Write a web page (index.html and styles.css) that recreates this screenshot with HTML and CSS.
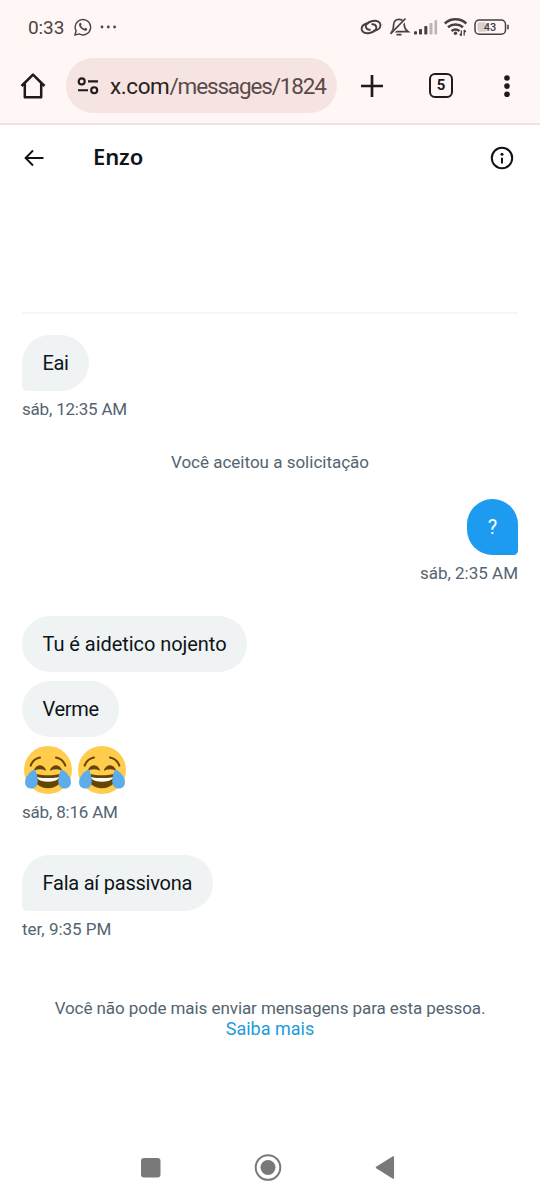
FILE: index.html
```html
<!DOCTYPE html>
<html lang="pt-BR">
<head>
<meta charset="utf-8">
<title>Enzo</title>
<link rel="stylesheet" href="styles.css">
</head>
<body>
<svg class="defs" width="0" height="0" aria-hidden="true">
  <symbol id="joy" viewBox="0 0 36 36">
    <circle cx="18" cy="18" r="18" fill="#ffcc4d"/>
    <g fill="#664500">
      <path d="M28.457 17.797c-.06-.135-1.499-3.297-4.457-3.297-2.957 0-4.397 3.162-4.457 3.297-.092.207-.032.449.145.591.175.142.426.147.61.014.012-.009 1.262-.902 3.702-.902 2.426 0 3.674.881 3.702.901.088.066.194.099.298.099.11 0 .221-.037.312-.109.177-.142.238-.386.145-.594zm-12 0c-.06-.135-1.499-3.297-4.457-3.297-2.957 0-4.397 3.162-4.457 3.297-.092.207-.032.449.144.591.176.142.427.147.61.014.013-.009 1.262-.902 3.703-.902 2.426 0 3.674.881 3.702.901.088.066.194.099.298.099.11 0 .221-.037.312-.109.178-.142.237-.386.145-.594z"/>
      <path d="M18 22c-3.623 0-6.027-.422-9-1-.679-.131-2 0-2 2 0 4 4.595 8.700 11 8.700 6.404 0 11-4.700 11-8.700 0-2-1.321-2.132-2-2-2.973.578-5.377 1-9 1z"/>
    </g>
    <path d="M9 23s3 1 9 1 9-1 9-1-1.500 3.800-9 3.800S9 23 9 23z" fill="#fff"/>
    <path d="M5 14.700C6 12 8.500 9.300 12 8.700M31 14.700C30 12 27.500 9.300 24 8.700" fill="none" stroke="#664500" stroke-width="1.500" stroke-linecap="round"/>
    <path d="M8 17.700C4.500 19 .8 23 .8 27.200c0 3 2 4.700 4.500 4.700 3.200 0 5-2.300 5-5.700 0-3-1-6.500-2.300-8.500z" fill="#5dadec"/>
    <path d="M28 17.700c3.500 1.300 7.200 5.300 7.200 9.500 0 3-2 4.700-4.500 4.700-3.200 0-5-2.300-5-5.700 0-3 1-6.500 2.300-8.500z" fill="#5dadec"/>
  </symbol>
</svg>

<div class="chrome">
  <div class="status">
    <span class="clock">0:33</span>
    <svg class="whatsapp" width="18" height="18" viewBox="0 0 18 18" fill="none" stroke="#4b4444" stroke-width="1.400">
      <path d="M1 17l1.100-4.200A7.700 7.700 0 1 1 5.100 15.900z"/>
      <path d="M5.600 5.200c.5-.7 1.200-.6 1.500.1l.5 1.300-.7 1c.8 1.500 1.800 2.500 3.500 3.200l.9-1 1.500.7c.6.3.5 1.100-.1 1.700-1 .9-2.600.5-4.300-.6-2-1.300-4.400-4.600-2.800-6.400z" fill="#4b4444" stroke="none"/>
    </svg>
    <svg width="18" height="18" viewBox="0 0 18 18" fill="#4b4444"><circle cx="2" cy="9" r="1.400"/><circle cx="8.300" cy="9" r="1.400"/><circle cx="14.600" cy="9" r="1.400"/></svg>
    <svg class="indicators" width="150" height="20" viewBox="360 17 150 20" fill="none" stroke="#484040" stroke-width="1.700">
      <g stroke-linecap="round" stroke-width="1.900">
        <path d="M368.200 23.200C363.500 24 361.300 26.500 361.700 29.500C362.200 32.500 365.500 33.800 369.500 33C374.500 32 377 29.500 376.200 26.700C375.700 25 374.200 24.200 372.300 24.300"/>
        <path d="M373.900 30.800C378.600 30 380.800 27.500 380.400 24.500C379.900 21.500 376.600 20.200 372.600 21C367.600 22 365.100 24.500 365.900 27.300C366.400 29 367.900 29.800 369.800 29.700"/>
      </g>
      <path d="M391.700 31.700h16.500c-2.600-2-3.900-3.200-3.900-6.700 0-3.500-2-5.700-5.300-5.700s-5.400 2.400-5.400 5.700c0 3.500-.4 5-1.900 6.700zM396.500 34.700h5"/>
      <path d="M406.500 18.800L391 34.300" stroke="#fff7f5" stroke-width="3"/>
      <path d="M405.500 18.500L390.500 33.800"/>
      <g stroke="none" fill="#484040">
        <rect x="414" y="31.300" width="3" height="3.200" rx=".7"/><rect x="419" y="29" width="3" height="5.500" rx=".7"/><rect x="424.300" y="26" width="3" height="8.500" rx=".7"/>
        <g fill="#bdb5b4"><rect x="429.500" y="23" width="3" height="11.500" rx=".7"/><rect x="434.500" y="20" width="2.600" height="14.500" rx=".7"/></g>
      </g>
      <path d="M444.800 23.500a16 16 0 0 1 21.500 0M448 27.300a11.500 11.500 0 0 1 15 0M451.500 31a6.500 6.500 0 0 1 8 0" stroke-width="2.500"/>
      <circle cx="455.500" cy="33.300" r="1.700" fill="#484040" stroke="none"/>
      <path d="M461.300 30.500v5.500M464.200 30v5.500M459.800 33.800l1.500 2M464.200 30l1.600 2" stroke-width="1.300"/>
      <rect x="475" y="19.900" width="30.500" height="14.300" rx="4.300" stroke-width="1.500"/>
      <rect x="477.500" y="22.300" width="9.500" height="9.500" rx="2" fill="#d8d1d0" stroke="none"/>
      <path d="M508 24.700v4.600" stroke-width="1.600"/>
      <text class="charge" x="490" y="31">43</text>
    </svg>
  </div>
  <div class="toolbar">
    <svg class="home" width="26" height="28" viewBox="0 0 26 28" fill="none" stroke="#201a1a" stroke-width="2.500" stroke-linejoin="round"><path d="M1.500 14L13 2.600 24.500 14M4.800 11.500v13.700h16.400V11.500"/></svg>
    <div class="address">
      <svg width="22" height="18" viewBox="0 0 22 18" fill="none" stroke="#201a1a" stroke-width="2.100"><circle cx="4.700" cy="4.400" r="3"/><path d="M11 4.400h10M1 13.200h10"/><circle cx="17.200" cy="13.200" r="3"/></svg>
      <span class="url"><b>x.com</b>/messages/1824</span>
    </div>
    <svg class="plus" width="24" height="24" viewBox="0 0 24 24" stroke="#201a1a" stroke-width="2.700"><path d="M12 1v22M1 12h22"/></svg>
    <span class="tabs">5</span>
    <svg class="more" width="8" height="24" viewBox="0 0 8 24" fill="#201a1a"><circle cx="4" cy="4" r="2.800"/><circle cx="4" cy="12.100" r="2.800"/><circle cx="4" cy="20.200" r="2.800"/></svg>
  </div>
</div>

<header class="header">
  <svg width="20" height="18" viewBox="0 0 20 18" fill="none" stroke="#0f1419" stroke-width="1.900"><path d="M19.500 9H2M9 1.500L1.600 9 9 16.500"/></svg>
  <h1>Enzo</h1>
  <svg class="info" width="24" height="24" viewBox="0 0 24 24" fill="none" stroke="#0f1419" stroke-width="2"><circle cx="12" cy="12" r="10.200"/><path d="M12 11.800v5.700"/><circle cx="12" cy="8.300" r="1.500" fill="#0f1419" stroke="none"/></svg>
</header>

<main class="chat">
  <section class="group first">
    <div class="bubble tail eai">Eai</div>
    <time class="late">sáb, 12:35 AM</time>
  </section>
  <p class="notice">Você aceitou a solicitação</p>
  <section class="group sent">
    <div class="bubble blue">?</div>
    <time>sáb, 2:35 AM</time>
  </section>
  <section class="group third">
    <div class="bubble tu">Tu é aidetico nojento</div>
    <div class="bubble verme">Verme</div>
    <div class="emojis">
      <svg width="48" height="48" role="img" aria-label="😂"><use href="#joy"/></svg>
      <svg width="48" height="48" role="img" aria-label="😂"><use href="#joy"/></svg>
    </div>
    <time class="late">sáb, 8:16 AM</time>
  </section>
  <section class="group fourth">
    <div class="bubble tail fala">Fala aí passivona</div>
    <time>ter, 9:35 PM</time>
  </section>
  <p class="blocked"><span>Você não pode mais enviar mensagens para esta pessoa.</span><a>Saiba mais</a></p>
</main>

<nav class="nav">
  <svg width="300" height="40" viewBox="120 1148 300 40" fill="#797979">
    <rect x="141" y="1158" width="19.500" height="19.500" rx="3"/>
    <circle cx="268" cy="1167.500" r="12.300" fill="none" stroke="#797979" stroke-width="2"/>
    <circle cx="268" cy="1167.500" r="7.500"/>
    <path d="M376.500 1167.500L393.300 1157v21z" stroke="#797979" stroke-width="1.500" stroke-linejoin="round"/>
  </svg>
</nav>
</body>
</html>
```

FILE: styles.css
```css
* { box-sizing: border-box; }
body {
  margin: 0;
  width: 540px;
  height: 1200px;
  display: flex;
  flex-direction: column;
  background: #fff;
  color: #0f1419;
  font-family: Roboto, "Liberation Sans", sans-serif;
  overflow: hidden;
}
svg { display: block; flex: none; }
.defs { position: absolute; }
.chrome { height: 125px; background: #fff7f5; border-bottom: 2px solid #f1e2e1; }
.status { height: 54px; display: flex; align-items: center; padding: 0 30px 0 28px; }
.clock { font-size: 19px; width: 46px; color: #4b4444; letter-spacing: -.1px; line-height: 22px; padding-top: 1px; }
.whatsapp { margin-right: 8px; }
.indicators { margin-left: auto; }
.charge { font: 500 11px Roboto, sans-serif; fill: #484040; stroke: none; text-anchor: middle; }
.toolbar { height: 63px; display: flex; align-items: center; padding: 0 29px 0 20px; }
.home { margin-right: 20px; }
.address {
  width: 271px;
  height: 55px;
  margin: 4px 23px 4px 0;
  padding-left: 11px;
  display: flex;
  flex: none;
  align-items: center;
  gap: 11px;
  border-radius: 28px;
  background: #f5e4e2;
}
.url { font-size: 22.5px; color: #5b4a4a; white-space: nowrap; letter-spacing: -1.15px; }
.url b { font-weight: 400; color: #2a2020; letter-spacing: -.4px; }
.tabs {
  width: 25px;
  height: 25px;
  margin: 0 50px 0 45px;
  border: 2.5px solid #201a1a;
  border-radius: 6px;
  color: #201a1a;
  font-size: 15px;
  font-weight: 700;
  line-height: 20px;
  text-align: center;
}
.header { height: 65px; display: flex; align-items: center; padding: 0 26px 0 24px; }
.header h1 { margin: -4px 0 0 49px; font: 600 22px/28px "Noto Sans", sans-serif; letter-spacing: -.1px; }
.info { margin-left: auto; }
.chat { margin: 122px 22px 0 22px; border-top: 2px solid #f4f6f7; }
.group { display: flex; flex-direction: column; align-items: flex-start; }
.first { margin-top: 21px; }
.bubble {
  height: 56px;
  padding: 0 20.5px;
  border-radius: 28px;
  background: #eff3f4;
  font-size: 20px;
  line-height: 56px;
  white-space: nowrap;
}
.tail { border-bottom-left-radius: 5px; }
.eai { letter-spacing: -.4px; }
.tu { letter-spacing: -.05px; }
.verme { letter-spacing: -.3px; }
.fala { letter-spacing: -.23px; }
.blue { background: #1d9bf0; color: #fff; border-bottom-right-radius: 5px; width: 51px; text-align: center; }
time { margin-top: 7px; font-size: 17px; line-height: 22px; color: #536471; white-space: nowrap; }
.late { letter-spacing: -.2px; }
.notice { margin: 31px 0 0; text-align: center; font-size: 17px; line-height: 22px; color: #536471; }
.sent { margin-top: 26px; align-items: flex-end; }
.third { margin-top: 32px; }
.third .bubble { margin-bottom: 9px; }
.emojis { display: flex; gap: 6px; padding-left: 2.4px; }
.fourth { margin-top: 32px; }
.blocked { margin: 58px 0 0; font-size: 17px; line-height: 21px; color: #536471; text-align: center; white-space: nowrap; }
.blocked span, .blocked a { display: block; }
.blocked span { letter-spacing: -.07px; }
.blocked a { color: #1d9bd9; font-size: 18px; line-height: 19px; }
.nav { margin-top: auto; height: 52px; display: flex; justify-content: center; }
```
